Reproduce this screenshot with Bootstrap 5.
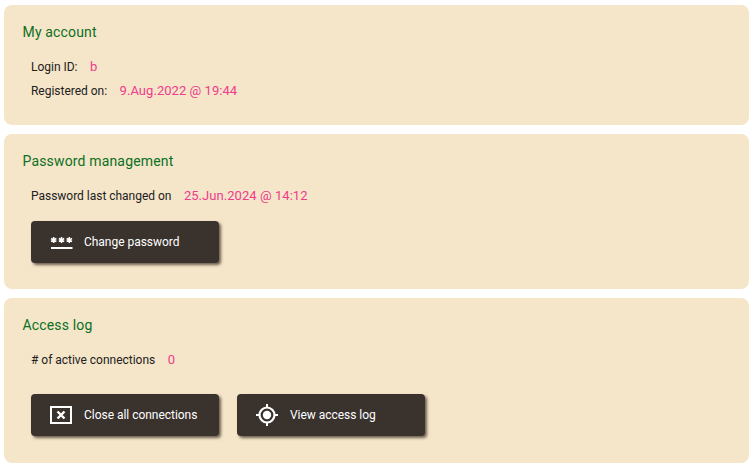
<!DOCTYPE html>
<html lang="en">
<head>
    <meta charset="UTF-8">
    <meta name="viewport" content="width=device-width, initial-scale=1.0">
    <title>My account</title>
    <link href="https://cdn.jsdelivr.net/npm/bootstrap@5.3.2/dist/css/bootstrap.min.css" rel="stylesheet">
    <style>
        body { font-family: Roboto, "Liberation Sans", sans-serif; background: #fff; }
        .page-wrap { padding: 5px 3px 0 4px; gap: 9px; }
        .acct-panel { background: #f5e5c9; border-radius: 8px; padding: 18px 19px 0 18.5px; }
        .panel-1 { height: 120px; }
        .panel-2 { height: 155px; }
        .panel-3 { height: 165px; }
        .acct-title { color: #0b701f; font-size: 14px; line-height: 18px; font-weight: 400; letter-spacing: .16px; margin: 0 0 14px; }
        .info-row { padding-left: 8.5px; height: 24px; align-items: center; color: #212121; font-size: 12px; letter-spacing: -.02px; }
        .info-val { color: #ee3b8c; font-size: 13px; margin-left: 12.5px; letter-spacing: .05px; }
        .dark-btn { background: #3a322d; color: #fff; border: 0; border-radius: 4px; height: 42px; font-size: 12px; letter-spacing: -.03px; box-shadow: 2px 2px 3px rgba(60,50,40,.75); padding: 0; }
        .dark-btn:hover { background: #3a322d; color: #fff; }
        .btn-w1 { width: 188px; }
        .ico-box { width: 53px; padding-left: 19px; }
        .btn-row { padding-left: 8.5px; gap: 18px; }
        .btn-row-a { margin-top: 13px; }
        .btn-row-b { margin-top: 22px; }
    </style>
</head>
<body>

<div class="d-flex flex-column page-wrap">
    <section class="acct-panel panel-1">
        <h5 class="acct-title">My account</h5>
        <div class="d-flex info-row"><span>Login ID:</span><span class="info-val">b</span></div>
        <div class="d-flex info-row"><span>Registered on:</span><span class="info-val">9.Aug.2022 @ 19:44</span></div>
    </section>

    <section class="acct-panel panel-2">
        <h5 class="acct-title">Password management</h5>
        <div class="d-flex info-row"><span>Password last changed on</span><span class="info-val">25.Jun.2024 @ 14:12</span></div>
        <div class="d-flex btn-row btn-row-a">
            <button type="button" class="btn dark-btn btn-w1 d-flex align-items-center">
                <span class="ico-box d-flex">
                    <svg width="24" height="14" viewBox="0 0 24 14" fill="none" stroke="#fff" stroke-width="1.500">
                        <path d="M1 13h21.500" stroke-width="2"/>
                        <path d="M3.700 2v6M1 3.500l5.400 3M1 6.500l5.400-3"/>
                        <path d="M11.500 2v6M8.800 3.500l5.400 3M8.800 6.500l5.400-3"/>
                        <path d="M19.300 2v6M16.600 3.500l5.400 3M16.600 6.500l5.400-3"/>
                    </svg>
                </span>
                <span>Change password</span>
            </button>
        </div>
    </section>

    <section class="acct-panel panel-3">
        <h5 class="acct-title">Access log</h5>
        <div class="d-flex info-row"><span># of active connections</span><span class="info-val">0</span></div>
        <div class="d-flex btn-row btn-row-b">
            <button type="button" class="btn dark-btn btn-w1 d-flex align-items-center">
                <span class="ico-box d-flex">
                    <svg width="22" height="18" viewBox="0 0 22 18">
                        <rect x="1" y="1" width="20" height="16" fill="none" stroke="#fff" stroke-width="2"/>
                        <path d="M7.500 5.500l7 7M14.500 5.500l-7 7" stroke="#fff" stroke-width="2.400" fill="none"/>
                    </svg>
                </span>
                <span>Close all connections</span>
            </button>
            <button type="button" class="btn dark-btn btn-w1 d-flex align-items-center">
                <span class="ico-box d-flex">
                    <svg width="22" height="22" viewBox="0 0 22 22">
                        <circle cx="11" cy="11" r="7.500" fill="none" stroke="#fff" stroke-width="2.200"/>
                        <circle cx="11" cy="11" r="4.200" fill="#fff"/>
                        <path d="M11 0v3M11 19v3M0 11h3M19 11h3" stroke="#fff" stroke-width="2" fill="none"/>
                    </svg>
                </span>
                <span>View access log</span>
            </button>
        </div>
    </section>
</div>

<script src="https://cdn.jsdelivr.net/npm/bootstrap@5.3.2/dist/js/bootstrap.bundle.min.js"></script>
</body>
</html>
